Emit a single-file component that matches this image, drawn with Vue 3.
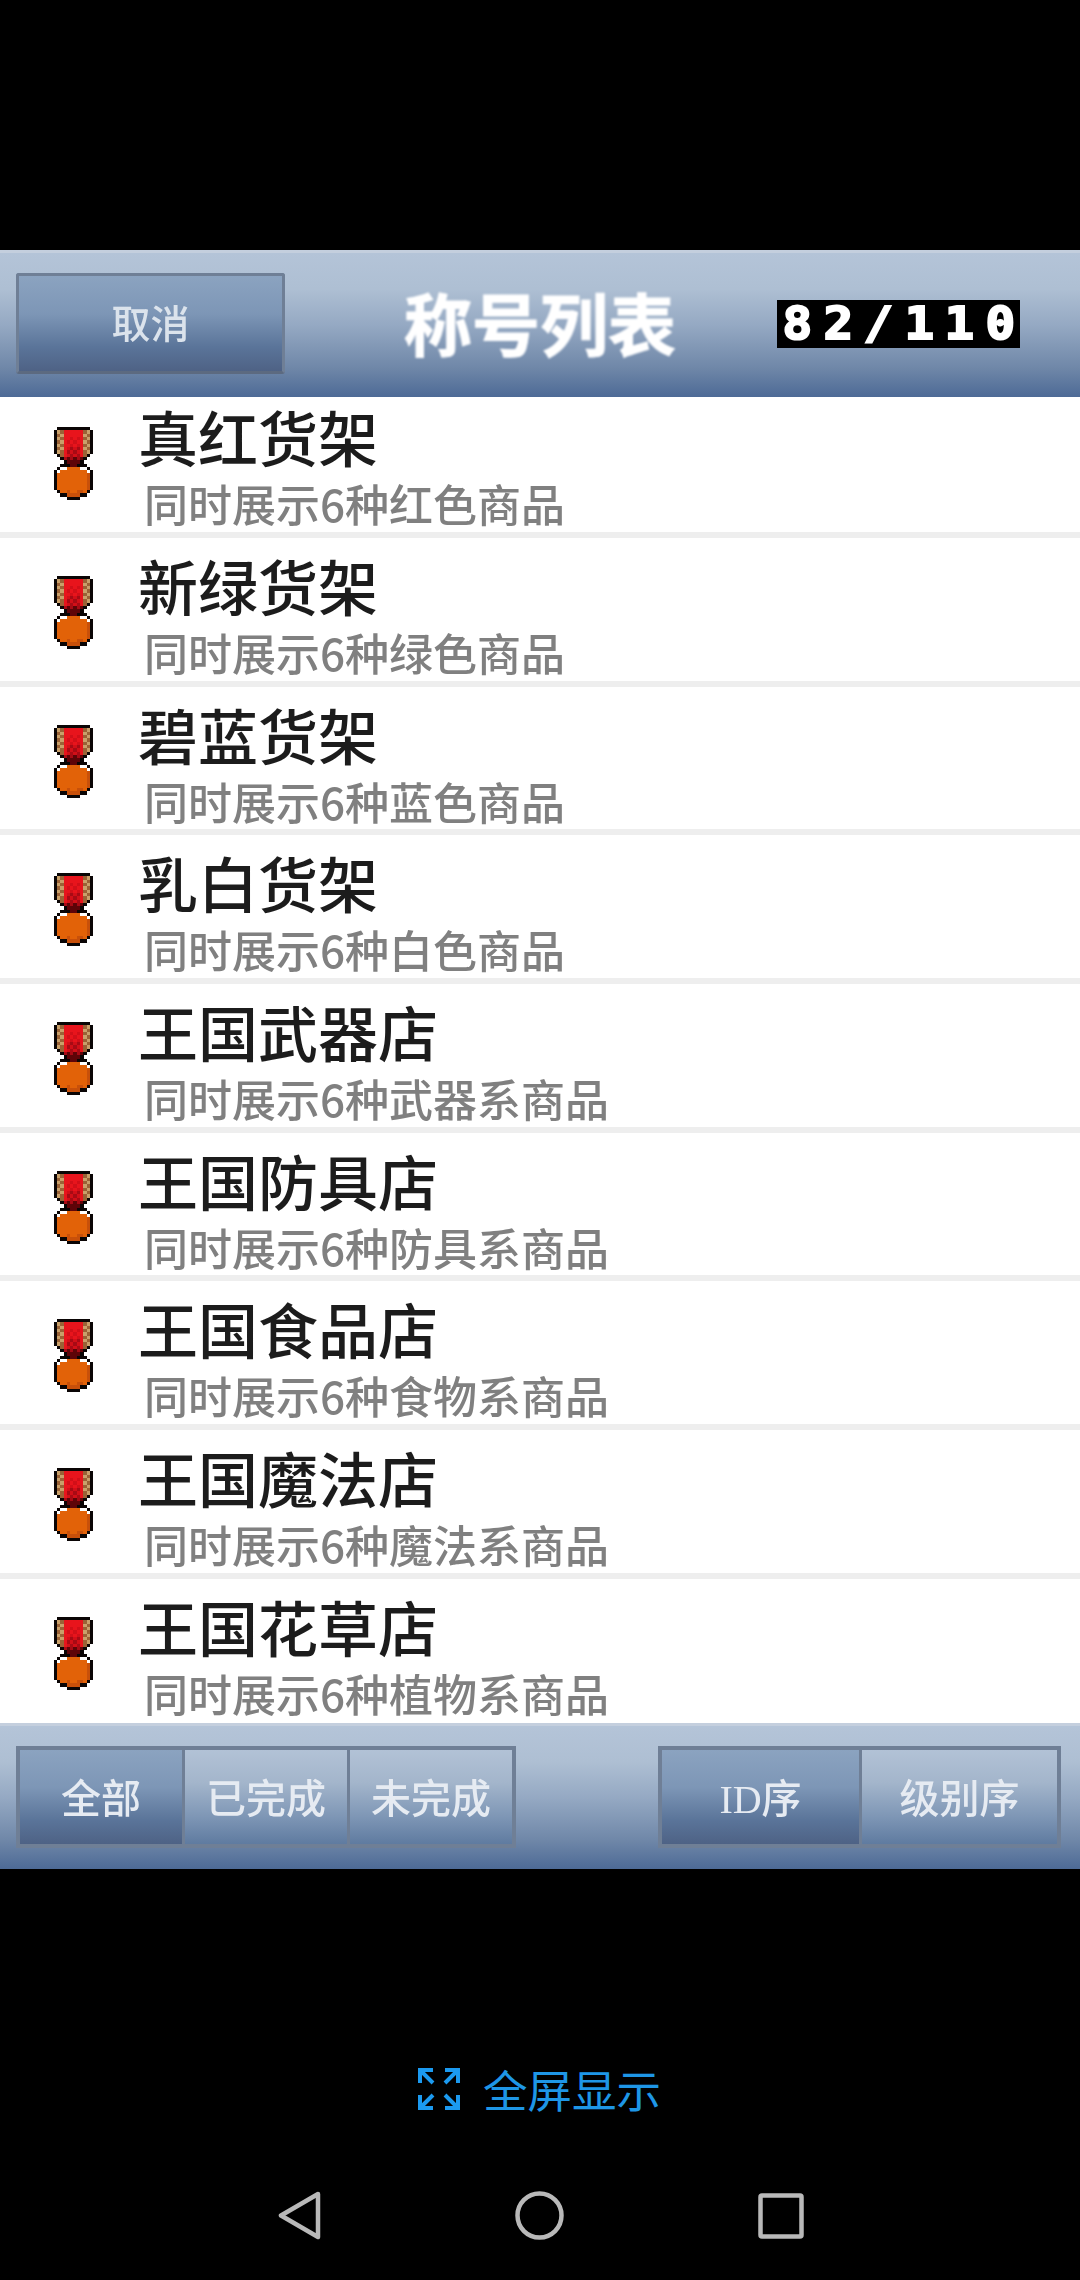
<template>
  <div class="screen">
    <div class="game">
      <!-- Top bar -->
      <header class="bar top-bar">
        <div class="cancel-cell">
          <button class="cancel-btn"><span class="cancel-label">取消</span></button>
        </div>
        <h1 class="page-title">称号列表</h1>
        <div class="counter-cell">
          <div class="counter">
            <span v-for="(ch, i) in counterChars" :key="i" class="counter-cell-char">
              <span class="counter-char">{{ ch }}</span>
            </span>
          </div>
        </div>
      </header>

      <!-- Title list -->
      <div class="list">
        <div v-for="item in titles" :key="item.name" class="row">
          <svg class="medal" viewBox="0 0 12 22" shape-rendering="crispEdges">
            <rect
              v-for="(px, i) in medalPixels"
              :key="i"
              :x="px.x"
              :y="px.y"
              width="1.02"
              height="1.02"
              :fill="px.fill"
            />
          </svg>
          <div class="row-text">
            <div class="row-name">{{ item.name }}</div>
            <div class="row-desc">{{ item.desc }}</div>
          </div>
        </div>
      </div>

      <!-- Filters and sort -->
      <footer class="bar bottom-bar">
        <div class="segments filter-seg">
          <button
            v-for="(f, i) in filters"
            :key="f"
            class="seg"
            :class="{ active: i === 0 }"
          ><span class="seg-label">{{ f }}</span></button>
        </div>
        <div class="segments sort-seg">
          <button class="seg active"><span class="seg-label"><span class="latin">ID</span>序</span></button>
          <button class="seg"><span class="seg-label">级别序</span></button>
        </div>
      </footer>
    </div>

    <div class="fullscreen">
      <svg class="fs-icon" viewBox="0 0 42 42" fill="none" stroke="#1b9af0" stroke-width="4">
        <path d="M2 15V2h13M3 3l12 12" />
        <path d="M27 2h13v13M39 3L27 15" />
        <path d="M2 27v13h13M3 39l12-12" />
        <path d="M27 40h13V27M39 39L27 27" />
      </svg>
      <span class="fs-label">全屏显示</span>
    </div>

    <nav class="nav">
      <svg class="nav-back" viewBox="0 0 43 49" fill="none" stroke="#b9b9b9" stroke-width="4.5" stroke-linejoin="round">
        <path d="M40 3L3 24.5L40 46Z" />
      </svg>
      <svg class="nav-home" viewBox="0 0 49 49" fill="none" stroke="#b9b9b9" stroke-width="4.5">
        <circle cx="24.5" cy="24.5" r="22" />
      </svg>
      <svg class="nav-recent" viewBox="0 0 46 46" fill="none" stroke="#b9b9b9" stroke-width="4.5" stroke-linejoin="round">
        <rect x="2.5" y="2.5" width="41" height="41" rx="1.5" />
      </svg>
    </nav>
  </div>
</template>

<script setup>
const counterChars = '82/110'.split('')

const filters = ['全部', '已完成', '未完成']

const titles = [
  { name: '真红货架', desc: '同时展示6种红色商品' },
  { name: '新绿货架', desc: '同时展示6种绿色商品' },
  { name: '碧蓝货架', desc: '同时展示6种蓝色商品' },
  { name: '乳白货架', desc: '同时展示6种白色商品' },
  { name: '王国武器店', desc: '同时展示6种武器系商品' },
  { name: '王国防具店', desc: '同时展示6种防具系商品' },
  { name: '王国食品店', desc: '同时展示6种食物系商品' },
  { name: '王国魔法店', desc: '同时展示6种魔法系商品' },
  { name: '王国花草店', desc: '同时展示6种植物系商品' },
]

// Pixel map of the medal sprite, one char per sprite pixel
const MEDAL_MAP = [
  '.kkkkkkkkkk.',
  'ktbrrrrrrbtk',
  'kbtrrrrrrtbk',
  'ktbrrRrRrbtk',
  'kbtrRrRrrtbk',
  'ktbrrRrRrbtk',
  'kbtrRmRmrtbk',
  'ktbrmRmRrbtk',
  '.kbrRmRmrbk.',
  '..kmdmdmdk..',
  '...kddddk...',
  '..kkkddkkk..',
  '.k..oooo..k.',
  'k.oooooooo.k',
  'koooooooooOk',
  'koooooooooOk',
  'koooooooooOk',
  'koooooooooOk',
  'koooooooooOk',
  '.kooOooOOok.',
  '..kkOOOOkk..',
  '....kkkk....',
]

const MEDAL_COLORS = {
  k: '#0a0505',
  t: '#c9a06a',
  b: '#9a6236',
  r: '#e8141c',
  R: '#d20f18',
  m: '#a80a14',
  d: '#5e0408',
  o: '#e26208',
  O: '#c8500a',
}

const medalPixels = MEDAL_MAP.flatMap((line, y) =>
  line.split('').flatMap((c, x) => (MEDAL_COLORS[c] ? [{ x, y, fill: MEDAL_COLORS[c] }] : []))
)
</script>

<style scoped>
.screen {
  width: 1080px;
  height: 2280px;
  background: #000;
  overflow: hidden;
  display: flex;
  flex-direction: column;
  font-family: "Noto Sans CJK SC", "Liberation Sans", sans-serif;
}

.game {
  margin-top: 250px;
}

.bar {
  background: linear-gradient(#b4c4d8 0%, #aebfd3 25%, #95a9c3 50%, #6f87a8 80%, #4d6a96 100%);
  border-top: 3px solid #c4cfde;
}

.top-bar {
  height: 147px;
  box-sizing: border-box;
  display: grid;
  grid-template-columns: 1fr auto 1fr;
  align-items: center;
}

.cancel-cell {
  padding-left: 16px;
}

.cancel-btn {
  width: 269px;
  height: 101px;
  display: block;
  margin-top: -3px;
  box-sizing: border-box;
  border: 3px solid #6f7f96;
  border-bottom-color: #5c6a80;
  border-radius: 3px;
  background: linear-gradient(#8ba3c0 0%, #7d96b6 40%, #5a7499 75%, #4e6285 100%);
  color: #dbe3ec;
  font-family: inherit;
  font-size: 39px;
  font-weight: 500;
  padding: 0 0 5px;
}

.cancel-label {
  display: block;
  filter: blur(0.7px);
}

.page-title {
  margin: -7px 0 0;
  font-size: 68px;
  font-weight: 700;
  line-height: 80px;
  color: #fff;
  -webkit-text-stroke: 1px #fff;
  filter: blur(0.8px);
}

.counter-cell {
  display: flex;
  justify-content: flex-end;
  padding-right: 60px;
}

.counter {
  display: flex;
  margin-top: -3px;
  background: #000;
}

.counter-cell-char {
  width: 40.5px;
  height: 48px;
  display: flex;
  align-items: center;
  justify-content: center;
}

.counter-char {
  display: block;
  font-family: "DejaVu Sans Mono", monospace;
  font-weight: 700;
  font-size: 44px;
  line-height: 48px;
  color: #fff;
  -webkit-text-stroke: 2px #fff;
  transform: scaleX(1.12);
}

.list {
  height: 1326px;
  background: #fff;
}

.row {
  height: 142.7px;
  border-bottom: 6px solid #eeeeee;
  display: flex;
  align-items: flex-start;
  padding-left: 53px;
  background: #fff;
}

/* first row sits partly under the top bar, last one runs into the footer */
.row:first-child {
  height: 135px;
}

.row:last-child {
  height: 144px;
  border-bottom: none;
}

.medal {
  width: 41px;
  height: 73px;
  flex: none;
  margin-top: 38px;
  filter: blur(0.4px);
}

.row:first-child .medal {
  margin-top: 30.3px;
}

.row-text {
  margin-left: 44px;
  padding-top: 12px;
}

.row:first-child .row-text {
  padding-top: 4.3px;
}

.row-name {
  font-size: 60px;
  font-weight: 500;
  line-height: 70px;
  color: #1c1c1c;
  filter: blur(0.7px);
  white-space: nowrap;
}

.row-desc {
  margin-top: 7px;
  padding-left: 6px;
  font-size: 44px;
  font-weight: 500;
  line-height: 50px;
  color: #808080;
  filter: blur(0.7px);
  white-space: nowrap;
}

.bottom-bar {
  height: 146px;
  box-sizing: border-box;
  display: flex;
  justify-content: space-between;
  padding: 20px 19px 0 16px;
}

.segments {
  height: 102px;
  box-sizing: border-box;
  display: flex;
  border: 4px solid #6f7f96;
}

.filter-seg {
  width: 500px;
}

.sort-seg {
  width: 403px;
}

.seg {
  box-sizing: border-box;
  border: none;
  padding: 0 0 3px;
  border-left: 3px solid #6f7f96;
  background: linear-gradient(#b2c2d6 0%, #a3b5cb 35%, #7f97b6 70%, #5f7ba0 100%);
  color: #e6ebf2;
  font-family: inherit;
  font-size: 40px;
  font-weight: 500;
  flex: 1;
}

.seg-label {
  display: block;
  filter: blur(0.7px);
}

.seg:first-child {
  border-left: none;
}

.filter-seg .seg:first-child {
  flex: none;
  width: 162px;
}

.sort-seg .seg:first-child {
  flex: none;
  width: 197px;
}

.seg.active {
  background: linear-gradient(#8ba3c0 0%, #7d96b6 40%, #5a7499 75%, #4e6285 100%);
}

.latin {
  font-family: "Liberation Serif", serif;
}

.fullscreen {
  display: flex;
  justify-content: center;
  align-items: center;
  gap: 23px;
  margin-top: 198px;
  padding-right: 1px;
}

.fs-icon {
  width: 42px;
  height: 42px;
}

.fs-label {
  font-size: 44.5px;
  line-height: 44px;
  color: #1e96e6;
}

.nav {
  display: flex;
  justify-content: center;
  align-items: center;
  gap: 194px;
  margin-top: 80px;
  padding-left: 2px;
}

.nav-back {
  width: 43px;
  height: 49px;
}

.nav-home {
  width: 49px;
  height: 49px;
}

.nav-recent {
  width: 46px;
  height: 46px;
}
</style>

<style>
html,
body {
  background: #000;
}
</style>
